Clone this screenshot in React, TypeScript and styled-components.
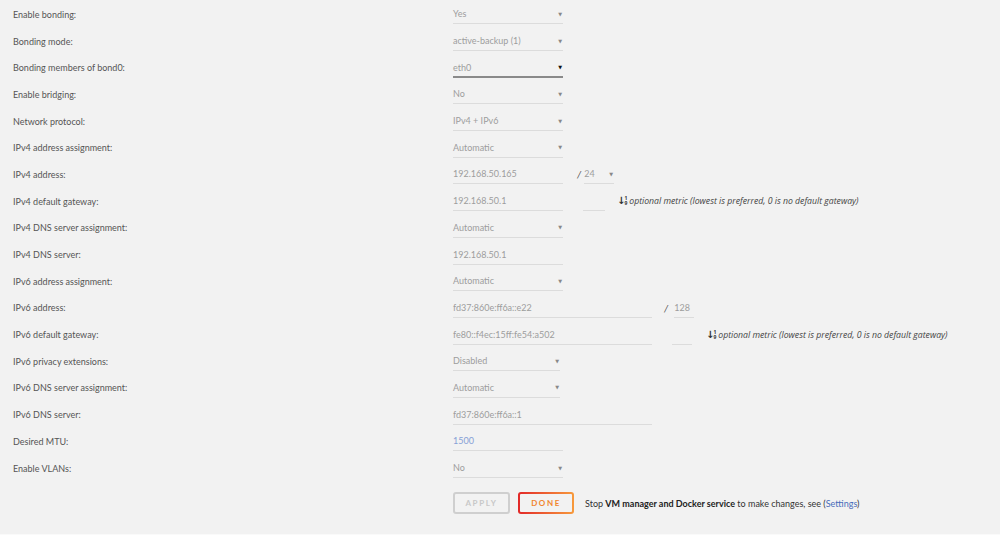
import React from "react";
import styled, { createGlobalStyle, css } from "styled-components";

const Global = createGlobalStyle`
  html, body { margin: 0; padding: 0; background: #f2f2f2; }
  body { font-family: Lato, "Open Sans", "Liberation Sans", sans-serif; }
`;

const Page = styled.div`
  width: 1000px;
  height: 535px;
  box-sizing: border-box;
  padding-top: 1px;
  background: #f2f2f2;
  border-bottom: 1px solid #fafafa;
  font-size: 9px;
`;

const Row = styled.div`
  display: grid;
  grid-template-columns: 453px auto;
  height: 26.7px;
  align-items: center;
`;

const Label = styled.div`
  padding-left: 13px;
  color: #555;
`;

const Fields = styled.div`
  display: flex;
  align-items: center;
`;

const fieldBase = css`
  box-sizing: border-box;
  height: 20px;
  display: flex;
  align-items: center;
  border-bottom: 1px solid #dcdcdc;
  color: #9d9d9d;
`;

const Select = styled.div<{ $w: number; $active?: boolean }>`
  ${fieldBase};
  width: ${(p) => p.$w}px;
  justify-content: space-between;
  padding-right: 1px;
  ${(p) =>
    p.$active &&
    css`
      border-bottom: 2px solid #8a8a8a;
      height: 21px;
      padding-top: 1px;
    `}
`;

const Caret = styled.span<{ $active?: boolean }>`
  font-family: "DejaVu Sans", sans-serif;
  font-size: 5px;
  color: ${(p) => (p.$active ? "#111" : "#888")};
`;

const Input = styled.div<{ $w: number; $blue?: boolean }>`
  ${fieldBase};
  width: ${(p) => p.$w}px;
  ${(p) => p.$blue && "color: #86a0d6;"}
`;

const Slash = styled.span<{ $ml: number; $mr: number }>`
  margin-left: ${(p) => p.$ml}px;
  margin-right: ${(p) => p.$mr}px;
  color: #555;
  font-size: 10px;
  font-style: italic;
`;

const Spacer = styled.span<{ $w: number }>`
  display: inline-block;
  width: ${(p) => p.$w}px;
`;

const Hint = styled.span<{ $ml: number }>`
  margin-left: ${(p) => p.$ml}px;
  display: inline-flex;
  align-items: center;
  color: #444;
  font-family: "Open Sans", sans-serif;
  font-size: 8.7px;
  font-style: italic;
`;

const SortIcon = styled.span`
  display: inline-flex;
  align-items: center;
  margin-right: 2px;
  font-style: normal;
  color: #333;
`;

const Arrow = styled.span`
  font-family: "DejaVu Sans", sans-serif;
  font-size: 10px;
  font-weight: bold;
  line-height: 1;
`;

const Digits = styled.span`
  display: inline-flex;
  flex-direction: column;
  font-size: 5px;
  line-height: 5px;
  font-weight: bold;
  margin-left: -1px;
`;

const ButtonRow = styled.div`
  display: flex;
  align-items: center;
  padding-left: 453px;
  margin-top: 11px;
  gap: 8px;
`;

const Button = styled.div<{ $done?: boolean }>`
  box-sizing: border-box;
  height: 22px;
  width: ${(p) => (p.$done ? 56 : 57)}px;
  border-radius: 3px;
  display: flex;
  align-items: center;
  justify-content: center;
  font-size: 8px;
  font-weight: bold;
  letter-spacing: 1.6px;
  ${(p) =>
    p.$done
      ? css`
          border: 2px solid transparent;
          background: linear-gradient(#f2f2f2, #f2f2f2) padding-box,
            linear-gradient(90deg, #e22828, #f79a3c) border-box;
          color: #f0862f;
        `
      : css`
          border: 2px solid #cfcfcf;
          color: #c8c8c8;
        `}
`;

const Note = styled.span`
  margin-left: 3px;
  color: #333;
  b { font-weight: bold; color: #222; }
`;

const Link = styled.span`
  color: #486dba;
`;

const Metric = () => (
  <SortIcon>
    <Arrow>↓</Arrow>
    <Digits>
      <span>1</span>
      <span>9</span>
    </Digits>
  </SortIcon>
);

type R = { label: string; field: React.ReactNode };

const rows: R[] = [
  { label: "Enable bonding:", field: <Select $w={110}>Yes<Caret>▼</Caret></Select> },
  { label: "Bonding mode:", field: <Select $w={110}>active-backup (1)<Caret>▼</Caret></Select> },
  { label: "Bonding members of bond0:", field: <Select $w={110} $active>eth0<Caret $active>▼</Caret></Select> },
  { label: "Enable bridging:", field: <Select $w={110}>No<Caret>▼</Caret></Select> },
  { label: "Network protocol:", field: <Select $w={110}>IPv4 + IPv6<Caret>▼</Caret></Select> },
  { label: "IPv4 address assignment:", field: <Select $w={110}>Automatic<Caret>▼</Caret></Select> },
  {
    label: "IPv4 address:",
    field: (
      <>
        <Input $w={110}>192.168.50.165</Input>
        <Slash $ml={14} $mr={3}>/</Slash>
        <Select $w={30}>24<Caret>▼</Caret></Select>
      </>
    ),
  },
  {
    label: "IPv4 default gateway:",
    field: (
      <>
        <Input $w={110}>192.168.50.1</Input>
        <Spacer $w={20} />
        <Input $w={22} />
        <Hint $ml={12}>
          <Metric />
          optional metric (lowest is preferred, 0 is no default gateway)
        </Hint>
      </>
    ),
  },
  { label: "IPv4 DNS server assignment:", field: <Select $w={110}>Automatic<Caret>▼</Caret></Select> },
  { label: "IPv4 DNS server:", field: <Input $w={110}>192.168.50.1</Input> },
  { label: "IPv6 address assignment:", field: <Select $w={110}>Automatic<Caret>▼</Caret></Select> },
  {
    label: "IPv6 address:",
    field: (
      <>
        <Input $w={199}>fd37:860e:ff6a::e22</Input>
        <Slash $ml={12} $mr={6}>/</Slash>
        <Input $w={20}>128</Input>
      </>
    ),
  },
  {
    label: "IPv6 default gateway:",
    field: (
      <>
        <Input $w={199}>fe80::f4ec:15ff:fe54:a502</Input>
        <Spacer $w={20} />
        <Input $w={20} />
        <Hint $ml={14}>
          <Metric />
          optional metric (lowest is preferred, 0 is no default gateway)
        </Hint>
      </>
    ),
  },
  { label: "IPv6 privacy extensions:", field: <Select $w={107}>Disabled<Caret>▼</Caret></Select> },
  { label: "IPv6 DNS server assignment:", field: <Select $w={107}>Automatic<Caret>▼</Caret></Select> },
  { label: "IPv6 DNS server:", field: <Input $w={199}>fd37:860e:ff6a::1</Input> },
  { label: "Desired MTU:", field: <Input $w={110} $blue>1500</Input> },
  { label: "Enable VLANs:", field: <Select $w={110}>No<Caret>▼</Caret></Select> },
];

export default function App() {
  return (
    <>
      <Global />
      <Page>
        {rows.map((r) => (
          <Row key={r.label}>
            <Label>{r.label}</Label>
            <Fields>{r.field}</Fields>
          </Row>
        ))}
        <ButtonRow>
          <Button>APPLY</Button>
          <Button $done>DONE</Button>
          <Note>
            Stop <b>VM manager and Docker service</b> to make changes, see (<Link>Settings</Link>)
          </Note>
        </ButtonRow>
      </Page>
    </>
  );
}
